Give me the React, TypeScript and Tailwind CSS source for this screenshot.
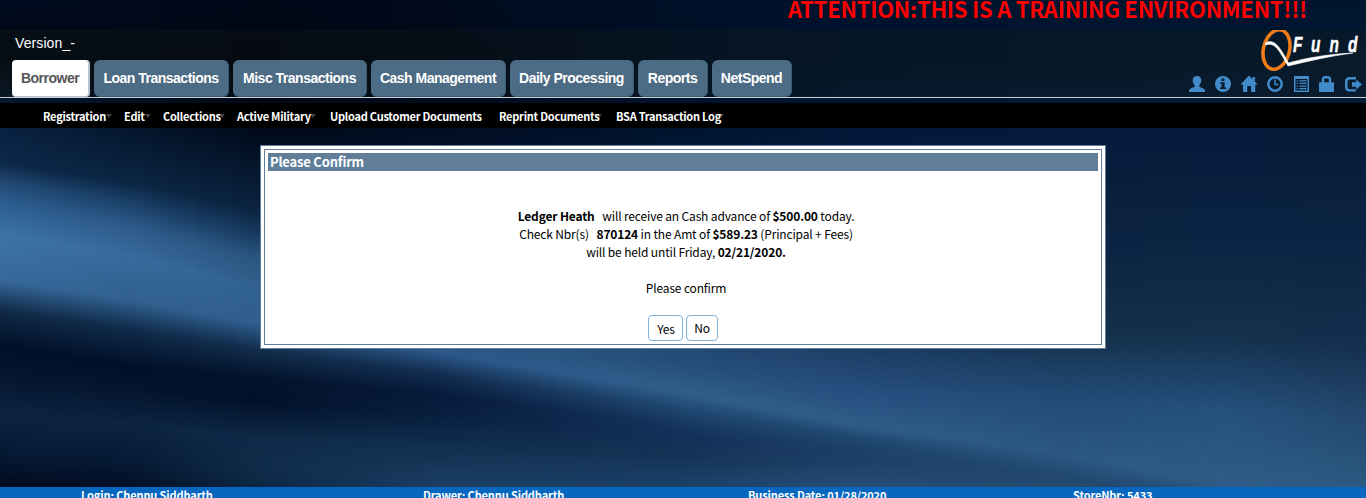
import React from "react";

type Stop = [number, string];
type Column = { x: number; stops: Stop[] };

// Colour profile of the silk backdrop at several columns; every column lists the same folds top to bottom.
const COLUMNS: Column[] = [
  { x: 0, stops: [[0, "000a20"], [60, "000813"], [130, "0a2242"], [163, "0c2848"], [182, "214973"], [205, "2d5f92"], [235, "3d74a8"], [280, "37689a"], [310, "102a47"], [345, "01102a"], [375, "04152f"], [415, "0c2342"], [450, "061a36"], [487, "020b20"]] },
  { x: 130, stops: [[0, "000a1c"], [60, "000813"], [130, "04162e"], [183, "0b2644"], [202, "1a3f68"], [225, "2d5988"], [255, "386a9c"], [300, "31608f"], [330, "0f2a49"], [366, "01102a"], [390, "04152f"], [425, "0c2342"], [460, "061a36"], [487, "020f26"]] },
  { x: 260, stops: [[0, "000818"], [60, "000613"], [130, "010a1a"], [210, "0a2340"], [235, "173a5f"], [258, "2a547f"], [290, "31618e"], [324, "2f5e8f"], [350, "122d4c"], [378, "03132c"], [402, "02112b"], [440, "0e2a48"], [465, "0f2d4a"], [487, "0c2745"]] },
  { x: 435, stops: [[0, "000a1c"], [60, "000a18"], [130, "010d22"], [230, "05193a"], [265, "123458"], [290, "1e4570"], [325, "28527e"], [352, "2b578a"], [373, "122d4f"], [395, "06193a"], [415, "081f3e"], [445, "102e4e"], [465, "163658"], [487, "1b3e66"]] },
  { x: 683, stops: [[0, "001028"], [60, "001026"], [130, "001430"], [250, "0a2444"], [280, "12305a"], [320, "1c4068"], [365, "274f7a"], [392, "2f5e8a"], [410, "1f4670"], [425, "16375f"], [435, "12305a"], [455, "143254"], [470, "173960"], [487, "1d4068"]] },
  { x: 860, stops: [[0, "00122e"], [60, "00142c"], [130, "021838"], [250, "0a2444"], [300, "10304f"], [340, "193a60"], [395, "284f80"], [425, "2e5c88"], [440, "1f466e"], [450, "1d4069"], [460, "1d3f66"], [470, "20446c"], [480, "244a72"], [487, "274f76"]] },
  { x: 1060, stops: [[0, "00142f"], [60, "02162e"], [130, "051a3a"], [250, "0c2442"], [300, "102c47"], [335, "13304a"], [395, "224a76"], [453, "2c5782"], [465, "265079"], [470, "244c74"], [475, "234970"], [481, "24486e"], [484, "24486e"], [487, "264d74"]] },
  { x: 1230, stops: [[0, "00142f"], [60, "021730"], [130, "051a3a"], [250, "0c2544"], [300, "102c48"], [335, "13304c"], [410, "25507d"], [485, "2e5c86"], [500, "265079"], [505, "244c74"], [510, "234970"], [515, "24486e"], [520, "24486e"], [530, "264d74"]] },
  { x: 1366, stops: [[0, "001430"], [60, "031932"], [130, "061a38"], [250, "0c2544"], [300, "102b48"], [345, "142f4e"], [420, "24496f"], [490, "2b5a82"], [510, "2b5a82"], [515, "265079"], [520, "234970"], [525, "24486e"], [530, "24486e"], [540, "264d74"]] },
];

const rgb = (h: string) => [0, 2, 4].map((i) => parseInt(h.slice(i, i + 2), 16));

function profile(x: number) {
  let k = 0;
  while (k < COLUMNS.length - 2 && x > COLUMNS[k + 1].x) k++;
  const a = COLUMNS[k];
  const b = COLUMNS[k + 1];
  const t = Math.min(1, (x - a.x) / (b.x - a.x));
  return a.stops.map(([y, c], i) => {
    const [y2, c2] = b.stops[i];
    const p = rgb(c);
    const q = rgb(c2);
    return { y: y + (y2 - y) * t, c: `rgb(${p.map((v, j) => Math.round(v + (q[j] - v) * t)).join(",")})` };
  });
}

const STRIPS = Array.from({ length: 683 }, (_, i) => i * 2);

function Backdrop() {
  return (
    <svg className="absolute inset-0 h-[498px] w-[1366px]" viewBox="0 0 1366 498" shapeRendering="crispEdges" aria-hidden="true">
      <defs>
        {STRIPS.map((x) => (
          <linearGradient key={x} id={`s${x}`} gradientUnits="userSpaceOnUse" x1="0" y1="0" x2="0" y2="540">
            {profile(x + 1).map((s, i) => (
              <stop key={i} offset={s.y / 540} stopColor={s.c} />
            ))}
          </linearGradient>
        ))}
      </defs>
      {STRIPS.map((x) => (
        <rect key={x} x={x} y="0" width="2" height="498" fill={`url(#s${x})`} />
      ))}
    </svg>
  );
}

const TABS = [
  { label: "Loan Transactions", w: "w-[135px]" },
  { label: "Misc Transactions", w: "w-[134px]" },
  { label: "Cash Management", w: "w-[135px]" },
  { label: "Daily Processing", w: "w-[124px]" },
  { label: "Reports", w: "w-[70px]" },
  { label: "NetSpend", w: "w-[80px]" },
];

const MENU = [
  { label: "Registration", w: "w-[81px]", arrow: "left-[63px]" },
  { label: "Edit", w: "w-[39px]", arrow: "left-[21px]" },
  { label: "Collections", w: "w-[74px]", arrow: "left-[56px]" },
  { label: "Active Military", w: "w-[93px]", arrow: "left-[73px]" },
  { label: "Upload Customer Documents", w: "w-[169px]", arrow: "" },
  { label: "Reprint Documents", w: "w-[117px]", arrow: "left-[97px]" },
  { label: "BSA Transaction Log", w: "w-[120px]", arrow: "left-[102px]" },
];

function Logo() {
  return (
    <svg className="h-[42px] w-[105px]" viewBox="0 0 105 42" aria-label="QFund">
      <ellipse cx="16.500" cy="19.500" rx="13" ry="20" transform="rotate(14 16.500 19.500)" fill="none" stroke="#ee7d18" strokeWidth="3.600" />
      <path d="M5.500 13C14 8 20 17 28.500 33C42 29 67 24 93 23C70 26 49 31 28 36C20 22 15 11 5.500 15Z" fill="#fff" stroke="#fff" strokeWidth="0.600" />
      <g fill="#fff" stroke="#fff" strokeWidth="0.500" fontFamily="Liberation Sans" fontWeight="700" fontStyle="italic" fontSize="22">
        <text transform="translate(33 22) scale(.7 1)">F</text>
        <text transform="translate(51 22) scale(.7 1)">u</text>
        <text transform="translate(69.500 22) scale(.7 1)">n</text>
        <text transform="translate(88 22) scale(.7 1)">d</text>
      </g>
    </svg>
  );
}

function Icons() {
  const cls = "h-[18px] w-[18px] shrink-0";
  return (
    <div className="flex gap-[8px] text-[#428bca]">
      <svg className={cls} viewBox="0 0 18 18" fill="currentColor"><path d="M9 1C11.800 1 13.300 2.800 13.300 5.200C13.300 7.400 12.400 9 11.300 10V11.500C11.300 12.500 17 13 17 15.800V17H1V15.800C1 13 6.700 12.500 6.700 11.500V10C5.600 9 4.700 7.400 4.700 5.200C4.700 2.800 6.200 1 9 1Z" /></svg>
      <svg className={cls} viewBox="0 0 18 18" fill="currentColor" fillRule="evenodd"><path d="M9 1a8 8 0 1 1 0 16A8 8 0 0 1 9 1ZM7.600 3.600V6h2.800V3.600ZM6 7.200V8.600h1.500V12.400H6V14h6.200V12.400H10.600V7.200Z" /></svg>
      <svg className={cls} viewBox="0 0 18 18" fill="currentColor"><path d="M9 .500L17.700 9.500H15.300V17H11V11H7.300V17H3V9.500H.500Z" /><path d="M12.500 2H15V6H12.500Z" /></svg>
      <svg className={cls} viewBox="0 0 18 18" fill="none" stroke="currentColor"><circle cx="9" cy="9" r="6.700" strokeWidth="2.500" /><path d="M9 4.500V9.600H12.500" strokeWidth="1.500" /></svg>
      <svg className={cls} viewBox="0 0 18 18" fill="currentColor" fillRule="evenodd"><path d="M2 1H17V17H2ZM3.500 4V15.500H15.500V4ZM4.700 5.200H6.100V6.500H4.700ZM7.500 5.200H14.500V6.500H7.500ZM4.700 7.800H6.100V9.100H4.700ZM7.500 7.800H14.500V9.100H7.500ZM4.700 10.400H6.100V11.700H4.700ZM7.500 10.400H14.500V11.700H7.500ZM4.700 13H6.100V14.300H4.700ZM7.500 13H14.500V14.300H7.500Z" /></svg>
      <svg className={cls} viewBox="0 0 18 18" fill="currentColor" fillRule="evenodd"><path d="M1 7.200H3.800V4.500Q3.800 1 7 1H10Q13.200 1 13.200 4.500V7.200H16V17H1ZM6.200 7.200H10.800V4.500Q10.800 3.400 9.700 3.400H7.300Q6.200 3.400 6.200 4.500Z" /></svg>
      <svg className={cls} viewBox="0 0 18 18" fill="currentColor"><path d="M12 2V4.500H6Q3.500 4.500 3.500 7V12Q3.500 14.300 6 14.300H12V16.600H5.500Q1 16.600 1 12.300V6.500Q1 2 5.500 2Z" /><path d="M8 7.200H12.200V4.500L18 9.500L12.200 14.500V11.800H8Z" /></svg>
    </div>
  );
}

export default function App() {
  return (
    <div className="relative h-[498px] w-[1366px] overflow-hidden font-['Noto_Sans_CJK_SC',sans-serif]">
      <Backdrop />
      <div className="relative flex h-[498px] flex-col">
        <div className="flex h-[30px] justify-end pr-[59px]">
          <h1 className="-mt-[8px] text-[22px] font-bold leading-[33px] tracking-[-0.26px] whitespace-nowrap text-[#ff0000]">ATTENTION:THIS IS A TRAINING ENVIRONMENT!!!</h1>
        </div>

        <header className="flex h-[68px] justify-between border-b border-[#c9d0d6] bg-[#1c2410]/20 font-['Liberation_Sans',sans-serif]">
          <div className="flex flex-col pl-[12px]">
            <div className="h-[30px] pl-[3px] pt-[3px] text-[14px] leading-[20px] tracking-[0.1px] text-white">Version_-</div>
            <nav className="flex gap-[4px] text-[14px] font-bold tracking-[-0.5px] text-white">
              <a className="flex h-[37px] w-[78px] items-center justify-center rounded-[4px] border-b border-r-2 border-[#b9c4ce] bg-white text-[#555]">Borrower</a>
              {TABS.map((t) => (
                <a key={t.label} className={`${t.w} flex h-[37px] items-center justify-center whitespace-nowrap rounded-[6px] border-b border-r border-[#3d5a73] bg-[#4c6b84]`}>{t.label}</a>
              ))}
            </nav>
          </div>
          <div className="flex flex-col items-end">
            <div className="mr-[1px] h-[45px]"><Logo /></div>
            <div className="mr-[4px]"><Icons /></div>
          </div>
        </header>

        <nav className="mt-[5px] flex h-[25px] shrink-0 items-center bg-black pl-[43px] text-[11px] font-bold tracking-[-0.25px] text-white">
          {MENU.map((m) => (
            <a key={m.label} className={`${m.w} relative shrink-0 whitespace-nowrap leading-[26px]`}>
              {m.arrow && <span className={`${m.arrow} absolute top-[11px] border-x-[3px] border-t-[4px] border-x-transparent border-t-[#444]`} />}
              <span className="relative">{m.label}</span>
            </a>
          ))}
        </nav>

        <main className="flex flex-1 justify-center pt-[17px]">
          <section className="h-[204px] w-[846px] border border-[#607e98] bg-white p-[3px]">
            <div className="flex h-full flex-col border border-[#607e98] p-[3px] text-[12px] leading-[18px] tracking-[-0.15px] text-black">
              <h2 className="h-[18px] shrink-0 bg-[#607e98] pl-[2px] text-[13px] font-bold leading-[18px] tracking-[-0.2px] text-white">Please Confirm</h2>
              <div className="flex flex-col items-center whitespace-pre pt-[36px]">
                <p className="pl-[6px]"><b>Ledger Heath</b>{"   will receive an Cash advance of "}<b>$500.00</b> today.</p>
                <p className="pl-[6px]">{"Check Nbr(s)   "}<b>870124</b> in the Amt of <b>$589.23</b> (Principal + Fees)</p>
                <p className="pl-[6px]">will be held until Friday, <b>02/21/2020.</b></p>
                <p className="pl-[6px] pt-[18px]">Please confirm</p>
                <div className="flex gap-[3px] pt-[18px]">
                  <button className="h-[26px] w-[35px] rounded-[4px] border border-[#7fb1dc] bg-white pl-px pt-px leading-[18px]">Yes</button>
                  <button className="h-[26px] w-[32px] rounded-[4px] border border-[#7fb1dc] bg-white leading-[18px]">No</button>
                </div>
              </div>
            </div>
          </section>
        </main>

        <footer className="flex h-[11px] shrink-0 overflow-hidden bg-[#0767bf] pl-[81px] text-[11px] font-bold leading-[17px] tracking-[-0.13px] text-white">
          <span className="w-[342px]">Login: Chennu Siddharth</span>
          <span className="w-[325px]">Drawer: Chennu Siddharth</span>
          <span className="w-[325px]">Business Date: 01/28/2020</span>
          <span>StoreNbr: 5433</span>
        </footer>
      </div>
    </div>
  );
}
